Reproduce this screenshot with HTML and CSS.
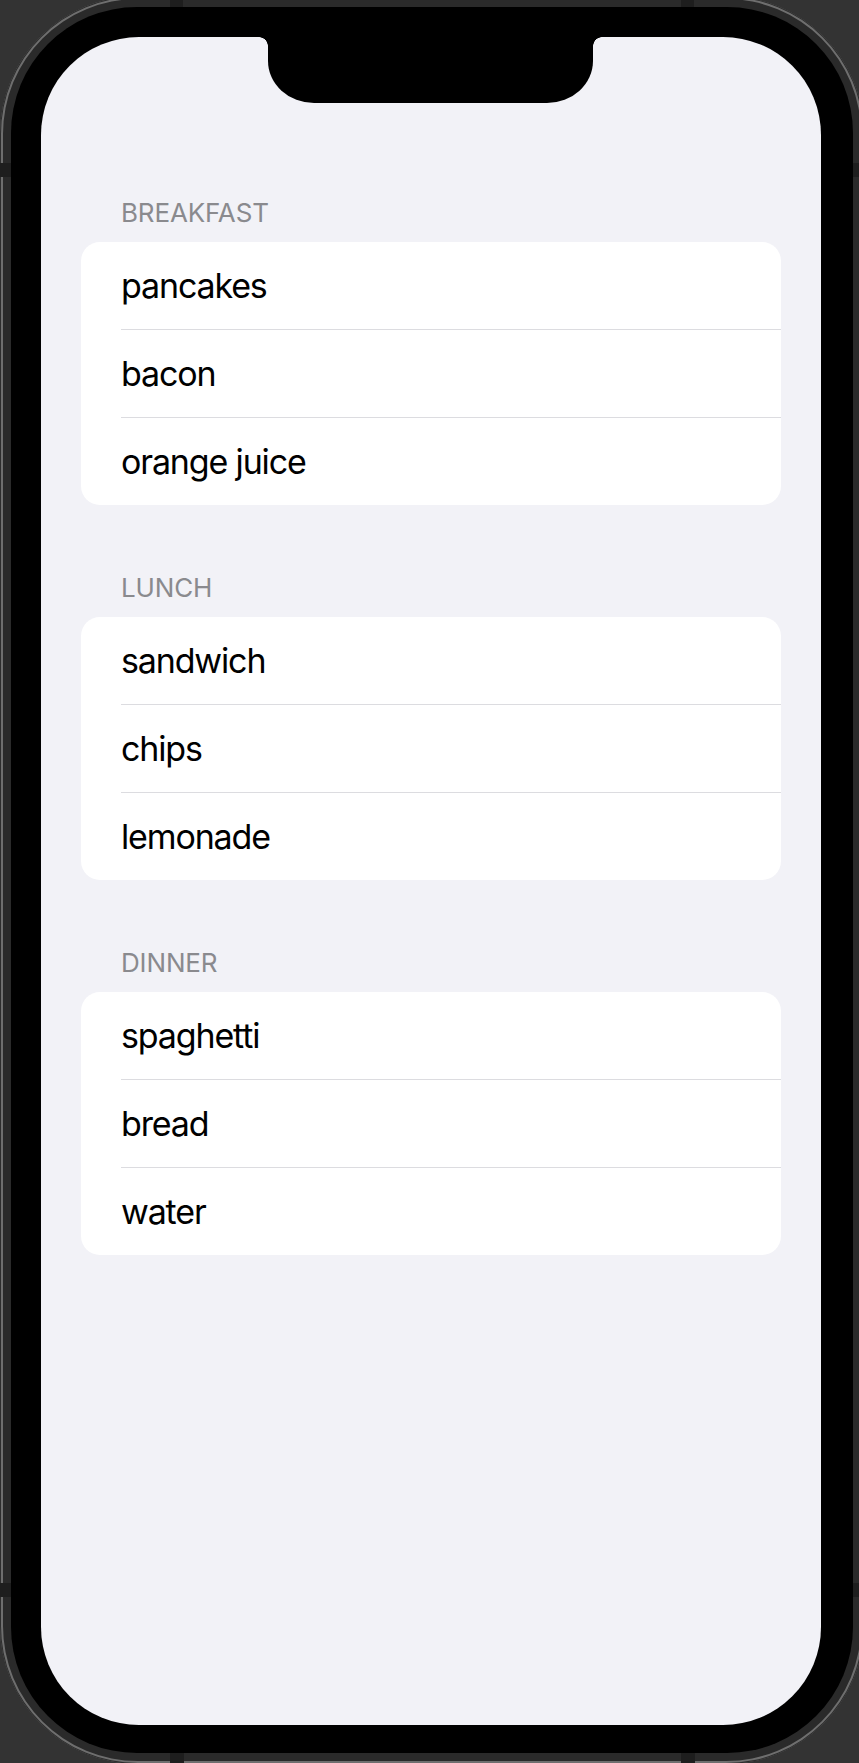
FILE: index.html
```html
<!DOCTYPE html>
<html lang="en">
<head>
<meta charset="utf-8">
<title>Meals</title>
<link rel="stylesheet" href="styles.css">
</head>
<body>
<div class="device">
  <span class="band band-top band-a"></span>
  <span class="band band-top band-b"></span>
  <span class="band band-bottom band-a"></span>
  <span class="band band-bottom band-b"></span>
  <span class="band band-left band-c"></span>
  <span class="band band-left band-d"></span>
  <span class="band band-right band-c"></span>
  <span class="band band-right band-d"></span>
  <div class="bezel">
    <div class="screen">
      <div class="notch"></div>
      <section class="group">
        <h2 class="group-title">BREAKFAST</h2>
        <ul class="card">
          <li class="row">pancakes</li>
          <li class="row">bacon</li>
          <li class="row">orange juice</li>
        </ul>
      </section>
      <section class="group">
        <h2 class="group-title">LUNCH</h2>
        <ul class="card">
          <li class="row">sandwich</li>
          <li class="row">chips</li>
          <li class="row">lemonade</li>
        </ul>
      </section>
      <section class="group">
        <h2 class="group-title">DINNER</h2>
        <ul class="card">
          <li class="row">spaghetti</li>
          <li class="row">bread</li>
          <li class="row">water</li>
        </ul>
      </section>
    </div>
  </div>
</div>
</body>
</html>
```

FILE: styles.css
```css
html, body {
  margin: 0;
  padding: 0;
  width: 859px;
  height: 1763px;
  overflow: hidden;
  background: #333333;
}

.device {
  position: relative;
  box-sizing: border-box;
  width: 864px;
  height: 1768px;
  margin-top: -4px;
  padding: 11px;
  border-radius: 138px;
  background: #2a2a2a;
  box-shadow: inset 0 0 0 1px #2d2d2d, inset 0 0 0 3px #6e6e6e;
}

.band {
  position: absolute;
  background: #1e1e1e;
}
.band-top { top: 0; height: 11px; width: 13px; }
.band-bottom { bottom: 0; height: 11px; width: 14px; }
.band-left { left: 0; width: 11px; height: 14px; }
.band-right { right: 0; width: 11px; height: 14px; }
.band-top.band-a, .band-bottom.band-a { left: 170px; }
.band-top.band-b, .band-bottom.band-b { left: 681px; }
.band-left.band-c, .band-right.band-c { top: 167px; }
.band-left.band-d, .band-right.band-d { top: 1587px; }

.bezel {
  box-sizing: border-box;
  height: 100%;
  padding: 30px 32px 28px 30px;
  border-radius: 126px;
  background: #000000;
}

.screen {
  position: relative;
  box-sizing: border-box;
  height: 100%;
  padding: 160px 40px 0;
  border-radius: 98px;
  overflow: hidden;
  background: #f2f2f7;
  font-family: Inter, "Noto Sans", sans-serif;
}

.notch {
  position: absolute;
  top: 0;
  left: 227px;
  width: 325px;
  height: 66px;
  background: #000000;
  border-radius: 0 0 46px 46px / 0 0 42px 42px;
}
.notch::before,
.notch::after {
  content: "";
  position: absolute;
  top: 0;
  width: 9px;
  height: 9px;
}
.notch::before {
  left: -9px;
  background: radial-gradient(circle at 0 100%, transparent 8.5px, #000 9px);
}
.notch::after {
  right: -9px;
  background: radial-gradient(circle at 100% 100%, transparent 8.5px, #000 9px);
}

.group {
  margin-bottom: 67px;
}

.group-title {
  margin: 0 0 13px;
  padding-left: 40px;
  font-size: 26px;
  line-height: 32px;
  font-weight: 400;
  letter-spacing: -0.15px;
  color: #8a8a8e;
}

.card {
  list-style: none;
  margin: 0;
  padding: 0;
  background: #ffffff;
  border-radius: 19px;
  overflow: hidden;
}

.row {
  display: flex;
  align-items: center;
  height: 87px;
  margin-left: 40px;
  font-size: 34px;
  letter-spacing: -1.15px;
  color: #000000;
}
.row + .row {
  border-top: 1px solid #dcdce0;
}
```
